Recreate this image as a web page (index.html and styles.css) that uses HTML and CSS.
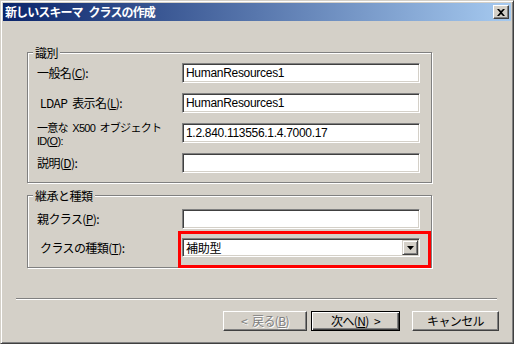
FILE: index.html
```html
<!DOCTYPE html>
<html lang="ja">
<head>
<meta charset="utf-8">
<title>新しいスキーマ クラスの作成</title>
<link rel="stylesheet" href="styles.css">
</head>
<body>
<div class="window">
  <div class="titlebar">
    <span class="title">新しいスキーマ クラスの作成</span>
    <span class="close">
      <svg width="8" height="7" viewBox="0 0 8 7"><path d="M0 0h2l2 2 2-2h2L5 3.5 8 7H6L4 5 2 7H0l3-3.5z" fill="#000"/></svg>
    </span>
  </div>
  <div class="content">
    <fieldset class="group group-id">
      <legend>識別</legend>
      <div class="row">
        <label class="lbl">一般名(<u>C</u>):</label>
        <div class="field">HumanResources1</div>
      </div>
      <div class="row">
        <label class="lbl indent">LDAP 表示名(<u>L</u>):</label>
        <div class="field">HumanResources1</div>
      </div>
      <div class="row row-top">
        <label class="lbl two"><span class="line">一意な X500 オブジェクト</span><span class="line">ID(<u>O</u>):</span></label>
        <div class="field">1.2.840.113556.1.4.7000.17</div>
      </div>
      <div class="row">
        <label class="lbl">説明(<u>D</u>):</label>
        <div class="field"></div>
      </div>
    </fieldset>
    <fieldset class="group group-kind">
      <legend>継承と種類</legend>
      <div class="row">
        <label class="lbl">親クラス(<u>P</u>):</label>
        <div class="field"></div>
      </div>
      <div class="row row-combo">
        <label class="lbl indent">クラスの種類(<u>T</u>):</label>
        <div class="combo">
          <span class="combo-text">補助型</span>
          <span class="combo-btn"><svg width="7" height="4" viewBox="0 0 7 4"><path d="M0 0h7L3.5 4z" fill="#000"/></svg></span>
          <span class="highlight"></span>
        </div>
      </div>
    </fieldset>
  </div>
  <div class="separator"></div>
  <div class="buttons">
    <div class="wizard-pair">
      <span class="btn disabled">&lt; 戻る(<u>B</u>)</span>
      <span class="btn default">次へ(<u>N</u>) &gt;</span>
    </div>
    <span class="btn">キャンセル</span>
  </div>
</div>
</body>
</html>
```
FILE: styles.css
```css
html, body {
  margin: 0;
  padding: 0;
  background: #d4d0c8;
}
body {
  font-family: "Noto Sans CJK JP", sans-serif;
  font-size: 12px;
  color: #000;
}
.window {
  width: 514px;
  height: 344px;
  box-sizing: border-box;
  background: #d4d0c8;
  border: 1px solid;
  border-color: #d4d0c8 #404040 #404040 #d4d0c8;
  box-shadow: inset 1px 1px 0 #fff, inset -1px -1px 0 #808080;
  padding: 2px;
  display: flex;
  flex-direction: column;
}
.titlebar {
  height: 18px;
  flex: none;
  background: linear-gradient(to right, #0a246a, #a6caf0);
  display: flex;
  align-items: center;
  justify-content: space-between;
  padding: 0 2px 0 2px;
}
.title {
  color: #fff;
  font-weight: bold;
  font-size: 12px;
  line-height: 14px;
  letter-spacing: -0.9px;
  word-spacing: 4px;
}
.close {
  width: 16px;
  height: 14px;
  box-sizing: border-box;
  background: #d4d0c8;
  border: 1px solid;
  border-color: #fff #404040 #404040 #fff;
  box-shadow: inset -1px -1px 0 #808080;
  display: flex;
  align-items: center;
  justify-content: center;
}
.content {
  padding: 25px 0 0 24px;
  display: flex;
  flex-direction: column;
  gap: 6px;
}
.group {
  margin: 0;
  width: 405px;
  box-sizing: border-box;
  border: 1px solid #808080;
  box-shadow: inset 1px 1px 0 #fff, 1px 1px 0 #fff;
  padding: 4px 11px 9px 9px;
  min-width: 0;
  display: flex;
  flex-direction: column;
  gap: 10px;
}
.group-kind {
  padding-top: 7px;
  padding-bottom: 10px;
  gap: 9px;
}
legend {
  padding: 0 2px;
  margin-left: -4px;
  line-height: 13px;
  font-size: 12px;
  background: #d4d0c8;
  letter-spacing: -0.5px;
}
.row {
  display: flex;
  align-items: center;
  justify-content: space-between;
  height: 20px;
}
.row-top {
  align-items: flex-start;
}
.row-combo {
  height: 19px;
}
.lbl {
  line-height: 12px;
  letter-spacing: -0.6px;
  word-spacing: 3px;
  white-space: nowrap;
}
.lbl.indent {
  padding-left: 3px;
}
.lbl.two {
  display: flex;
  flex-direction: column;
  margin-top: -1px;
  font-family: "Liberation Sans", "Noto Sans CJK JP", sans-serif;
  font-size: 11px;
  letter-spacing: -0.7px;
  word-spacing: 2px;
}
.lbl.two .line {
  display: block;
  height: 13px;
  line-height: 13px;
}
.field, .combo {
  width: 238px;
  height: 20px;
  box-sizing: border-box;
  background: #fff;
  border: 1px solid;
  border-color: #808080 #fff #fff #808080;
  box-shadow: inset 1px 1px 0 #404040, inset -1px -1px 0 #d4d0c8;
  font-family: "Liberation Sans", "Noto Sans CJK JP", sans-serif;
  font-size: 12px;
  line-height: 16px;
  padding: 1px 3px;
  letter-spacing: -0.3px;
  white-space: nowrap;
}
.combo {
  height: 19px;
  position: relative;
  display: flex;
  align-items: center;
  justify-content: space-between;
  padding: 1px 1px 1px 3px;
  font-family: "Noto Sans CJK JP", sans-serif;
}
.combo-text {
  line-height: 15px;
}
.combo-btn {
  width: 16px;
  height: 15px;
  box-sizing: border-box;
  background: #d4d0c8;
  border: 1px solid;
  border-color: #d4d0c8 #404040 #404040 #d4d0c8;
  box-shadow: inset 1px 1px 0 #fff, inset -1px -1px 0 #808080;
  display: flex;
  align-items: center;
  justify-content: center;
}
.highlight {
  position: absolute;
  left: -5px;
  top: -8px;
  width: 253px;
  height: 37px;
  box-sizing: border-box;
  border: 3px solid #ff0000;
  pointer-events: none;
}
.separator {
  margin: 30px 14px 0 13px;
  border-top: 1px solid #808080;
  border-bottom: 1px solid #fff;
  height: 0;
}
.buttons {
  display: flex;
  justify-content: flex-end;
  gap: 12px;
  margin: 11px 12px 0 0;
}
.wizard-pair {
  display: flex;
  gap: 4px;
}
.btn {
  width: 87px;
  height: 20px;
  box-sizing: border-box;
  background: #d4d0c8;
  border: 1px solid;
  border-color: #fff #404040 #404040 #fff;
  box-shadow: inset -1px -1px 0 #808080;
  display: flex;
  align-items: center;
  justify-content: center;
  font-size: 12px;
  line-height: 14px;
  letter-spacing: -0.6px;
  word-spacing: 3px;
  white-space: nowrap;
}
.btn.disabled {
  width: 84px;
  color: #808080;
  text-shadow: 1px 1px 0 #fff;
}
.btn.default {
  width: 89px;
  border: 1px solid #000;
  box-shadow: inset 1px 1px 0 #fff, inset -1px -1px 0 #404040, inset -2px -2px 0 #808080;
}
u {
  text-decoration: underline;
  text-underline-offset: 1px;
}
```
